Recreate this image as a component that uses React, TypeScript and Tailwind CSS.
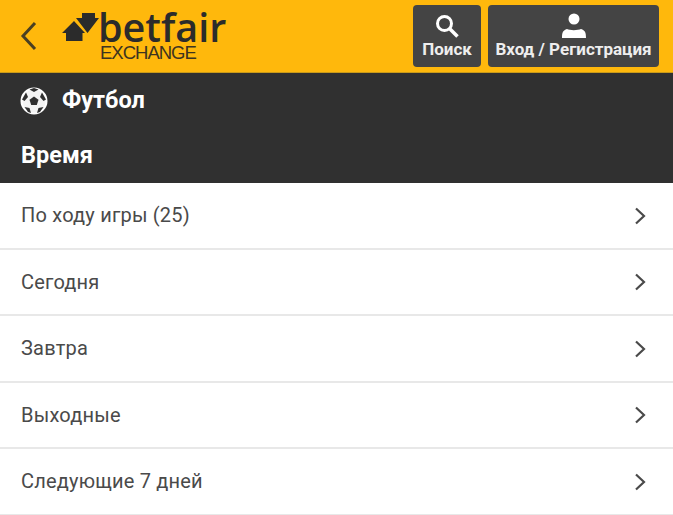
import React from "react";

const rows = ["По ходу игры (25)", "Сегодня", "Завтра", "Выходные", "Следующие 7 дней"];

function Logo() {
  return (
    <div className="flex items-start self-start mt-[12px]">
      <svg width="38" height="30" viewBox="0 0 38 30" className="shrink-0">
        <path d="M20 1h13v5h4L25.500 21 14 6h6z" fill="#2b2b2b" />
        <path d="M0 21 12 9l11 12h-2.500v8H4v-8z" fill="#2b2b2b" />
      </svg>
      <div className="flex flex-col -ml-[2px]">
        <span className="text-[39.5px] leading-[31px] font-semibold font-['Open_Sans',sans-serif] text-[#2b2b2b]">betfair</span>
        <span className="text-[18.5px] leading-[17px] font-['Liberation_Sans',sans-serif] text-[#3d3420] tracking-[-1px] ml-[2px] mt-[1px]">EXCHANGE</span>
      </div>
    </div>
  );
}

export default function App() {
  return (
    <div className="w-[673px] h-[515px] overflow-hidden bg-white font-['Roboto',sans-serif]">
      <header className="h-[73px] bg-[#ffb80c] flex items-center pl-[20px] pr-[14px] border-b-[1px] border-[#c99a1a]">
        <svg width="17" height="30" viewBox="0 0 17 30" fill="none" className="shrink-0 mr-[25px]">
          <path d="M15 2 3 15l12 13" stroke="#4a3f22" strokeWidth="3" />
        </svg>
        <Logo />
        <div className="ml-auto flex gap-[7px]">
          <button className="w-[68px] h-[62px] bg-[#444444] rounded-[4px] flex flex-col items-center text-white pt-[9px]">
            <svg width="24" height="24" viewBox="0 0 24 24" fill="none" className="-ml-[1px]">
              <circle cx="9.500" cy="9.500" r="7" stroke="white" strokeWidth="3" />
              <path d="m14.500 14.500 8 8" stroke="white" strokeWidth="3.500" />
            </svg>
            <span className="text-[17px] leading-[18px] font-bold text-[#eeeeee] mt-[2px]">Поиск</span>
          </button>
          <button className="w-[171px] h-[62px] bg-[#444444] rounded-[4px] flex flex-col items-center text-white pt-[8px]">
            <svg width="26" height="25" viewBox="0 0 26 25" fill="white">
              <circle cx="13" cy="6" r="5.500" />
              <path d="M1 25c0-6 1-7.500 5-9 2.500 1.500 11 1.500 14 0 4 1.500 5 3 5 9z" />
            </svg>
            <span className="text-[17px] leading-[18px] font-bold text-[#eeeeee] mt-[2px] whitespace-nowrap">Вход / Регистрация</span>
          </button>
        </div>
      </header>
      <section className="h-[110px] bg-[#303030] text-white font-bold">
        <div className="h-[55px] flex items-center pl-[20px] gap-[14px]">
          <svg width="28" height="28" viewBox="0 0 28 28" className="shrink-0">
            <circle cx="14" cy="14" r="12.500" fill="#f4f4f4" stroke="#ffffff" strokeWidth="2" />
            <path d="m14 9.500 4.500 3.300-1.700 5.200h-5.600l-1.700-5.200z" fill="#303030" />
            <path d="M9.500 2.500 14 5l4.500-2.500L14 1z" fill="#303030" />
            <path d="m22 5.500 4 7-2.500 1.500-3.500-4z" fill="#303030" />
            <path d="m6 5.500-4 7 2.500 1.500 3.500-4z" fill="#303030" />
            <path d="m4.500 20 5 1 1.500 5-3-1z" fill="#303030" />
            <path d="m23.500 20-5 1-1.500 5 3-1z" fill="#303030" />
          </svg>
          <span className="text-[23.5px] leading-none">Футбол</span>
        </div>
        <div className="h-[55px] flex items-center pl-[21px]">
          <span className="text-[23.5px] leading-none">Время</span>
        </div>
      </section>
      <ul>
        {rows.map((r) => (
          <li key={r} className="h-[66.5px] flex items-center justify-between pl-[21px] pr-[27px] border-b-2 border-[#e8e8e8]">
            <span className="text-[20px] tracking-[0.2px] text-[#4a4a4a]">{r}</span>
            <svg width="12" height="18" viewBox="0 0 12 18" fill="none" className="mt-[1px]">
              <path d="m2 1.500 8 7.500-8 7.500" stroke="#4a4a4a" strokeWidth="2.200" />
            </svg>
          </li>
        ))}
      </ul>
    </div>
  );
}
